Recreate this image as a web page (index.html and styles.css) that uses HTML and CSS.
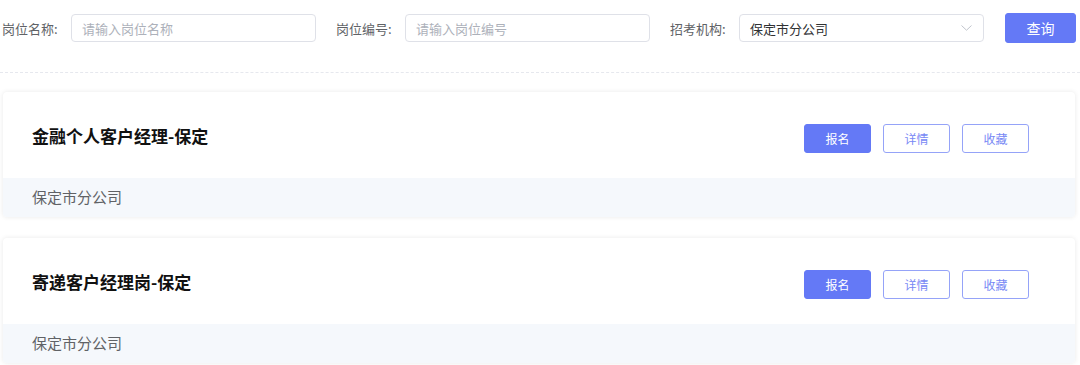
FILE: index.html
```html
<!DOCTYPE html>
<html lang="zh">
<head>
  <meta charset="utf-8">
  <title>岗位列表</title>
  <link rel="stylesheet" href="styles.css">
</head>
<body>
  <!-- Search bar -->
  <div class="filter-bar">
    <div class="field">
      <label class="field-label">岗位名称:</label>
      <input class="field-input" type="text" placeholder="请输入岗位名称">
    </div>
    <div class="field">
      <label class="field-label">岗位编号:</label>
      <input class="field-input" type="text" placeholder="请输入岗位编号">
    </div>
    <div class="field">
      <label class="field-label">招考机构:</label>
      <div class="field-select">
        <span>保定市分公司</span>
        <svg class="select-arrow" width="11" height="6" viewBox="0 0 11 6">
          <path d="M0.5 0.5 L5.5 5.2 L10.5 0.5" fill="none" stroke="#c0c4cc" stroke-width="1"/>
        </svg>
      </div>
    </div>
    <button class="btn btn-primary btn-search">查询</button>
  </div>

  <!-- Job list -->
  <div class="job-list">
    <div class="job-card">
      <div class="job-head">
        <h3 class="job-title">金融个人客户经理-保定</h3>
        <div class="job-actions">
          <button class="btn btn-primary btn-small">报名</button>
          <button class="btn btn-outline btn-small">详情</button>
          <button class="btn btn-outline btn-small">收藏</button>
        </div>
      </div>
      <div class="job-foot">保定市分公司</div>
    </div>
    <div class="job-card">
      <div class="job-head">
        <h3 class="job-title">寄递客户经理岗-保定</h3>
        <div class="job-actions">
          <button class="btn btn-primary btn-small">报名</button>
          <button class="btn btn-outline btn-small">详情</button>
          <button class="btn btn-outline btn-small">收藏</button>
        </div>
      </div>
      <div class="job-foot">保定市分公司</div>
    </div>
  </div>
</body>
</html>
```

FILE: styles.css
```css
body {
  margin: 0;
  padding: 0;
  background: #fff;
  font-family: "Noto Sans CJK SC", "Noto Sans", sans-serif;
  color: #303133;
}
.filter-bar {
  display: flex;
  align-items: center;
  height: 30px;
  padding: 13px 0 29px 2px;
  border-bottom: 1px dashed #e6e8ee; /* dashed divider under search */
}
.field {
  display: flex;
  align-items: center;
  margin-right: 20px;
}
.field-label {
  width: 57px;
  margin-right: 12px;
  font-size: 13px;
  color: #606266;
  white-space: nowrap;
}
.field-input, .field-select {
  box-sizing: border-box;
  width: 245px;
  height: 28px;
  border: 1px solid #dfe1e8;
  border-radius: 4px;
  padding: 0 10px;
  font-family: inherit;
  font-size: 13px;
  color: #303133;
  outline: none;
}
.field-input::placeholder {
  color: #adb1ba;
}
.field-select {
  display: flex;
  align-items: center;
  justify-content: space-between;
  padding-right: 11px;
}
.select-arrow {
  display: block;
}
.btn {
  font-family: inherit;
  border-radius: 3px;
  cursor: pointer;
  padding: 0;
}
.btn-primary {
  background: #6479f6;
  border: 1px solid #6479f6;
  color: #fff;
}
.btn-outline {
  background: #fff;
  border: 1px solid #95a3f8;
  color: #7888f5;
}
.btn-search {
  width: 71px;
  height: 30px;
  font-size: 14px;
  margin-left: 1px;
}
.job-list {
  padding: 19px 5px 0 3px;
}
.job-card {
  background: #fff;
  border-radius: 4px;
  box-shadow: 0 0 5px rgba(0, 0, 0, 0.09);
  margin-bottom: 21px;
  overflow: hidden;
}
.job-head {
  display: flex;
  align-items: center;
  justify-content: space-between;
  height: 86px;
  padding: 0 46px 0 29px;
}
.job-title {
  margin: 0;
  font-size: 17px;
  font-weight: 700;
  color: #111;
}
.job-actions {
  display: flex;
  gap: 12px;
  margin-top: 7px;
}
.btn-small {
  width: 67px;
  height: 29px;
  font-size: 12px;
}
.job-foot {
  height: 39px;
  line-height: 38px;
  padding-left: 29px;
  background: #f5f8fc;
  font-size: 15px;
  color: #606266;
}
```
